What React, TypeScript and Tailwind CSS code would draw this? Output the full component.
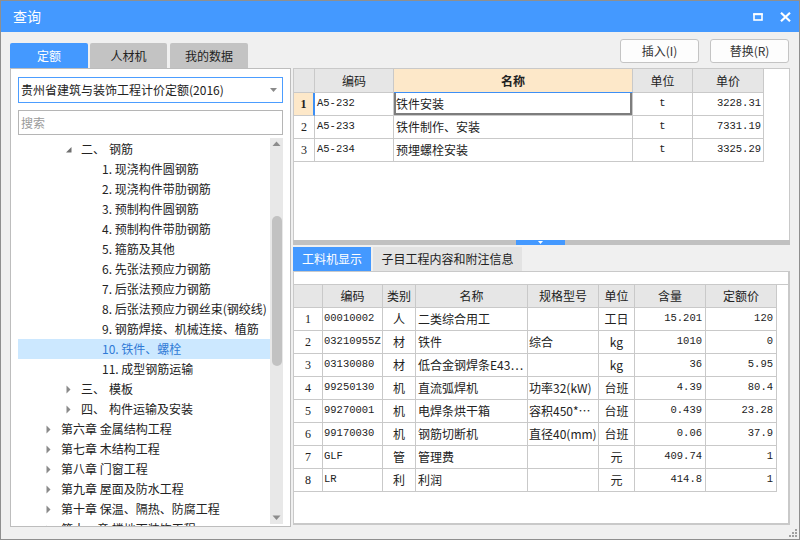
import React from "react";

type TreeRow = {
  lvl: 1 | 2 | 3;
  arrow?: "open" | "closed";
  head?: string;
  label: string;
  selected?: boolean;
};

const treeRows: TreeRow[] = [
  { lvl: 2, arrow: "open", head: "二、", label: "钢筋" },
  { lvl: 3, label: "1. 现浇构件圆钢筋" },
  { lvl: 3, label: "2. 现浇构件带肋钢筋" },
  { lvl: 3, label: "3. 预制构件圆钢筋" },
  { lvl: 3, label: "4. 预制构件带肋钢筋" },
  { lvl: 3, label: "5. 箍筋及其他" },
  { lvl: 3, label: "6. 先张法预应力钢筋" },
  { lvl: 3, label: "7. 后张法预应力钢筋" },
  { lvl: 3, label: "8. 后张法预应力钢丝束(钢绞线)" },
  { lvl: 3, label: "9. 钢筋焊接、机械连接、植筋" },
  { lvl: 3, label: "10. 铁件、螺栓", selected: true },
  { lvl: 3, label: "11. 成型钢筋运输" },
  { lvl: 2, arrow: "closed", head: "三、", label: "模板" },
  { lvl: 2, arrow: "closed", head: "四、", label: "构件运输及安装" },
  { lvl: 1, arrow: "closed", label: "第六章 金属结构工程" },
  { lvl: 1, arrow: "closed", label: "第七章 木结构工程" },
  { lvl: 1, arrow: "closed", label: "第八章 门窗工程" },
  { lvl: 1, arrow: "closed", label: "第九章 屋面及防水工程" },
  { lvl: 1, arrow: "closed", label: "第十章 保温、隔热、防腐工程" },
  { lvl: 1, arrow: "closed", label: "第十一章 楼地面装饰工程" },
];

const quotaRows = [
  { no: "1", code: "A5-232", name: "铁件安装", unit: "t", price: "3228.31" },
  { no: "2", code: "A5-233", name: "铁件制作、安装", unit: "t", price: "7331.19" },
  { no: "3", code: "A5-234", name: "预埋螺栓安装", unit: "t", price: "3325.29" },
];

const gljRows = [
  { no: "1", code: "00010002", kind: "人", name: "二类综合用工", spec: "", unit: "工日", qty: "15.201", price: "120" },
  { no: "2", code: "03210955Z", kind: "材", name: "铁件", spec: "综合", unit: "kg", qty: "1010", price: "0" },
  { no: "3", code: "03130080", kind: "材", name: "低合金钢焊条E43…", spec: "", unit: "kg", qty: "36", price: "5.95" },
  { no: "4", code: "99250130", kind: "机", name: "直流弧焊机", spec: "功率32(kW)", unit: "台班", qty: "4.39", price: "80.4" },
  { no: "5", code: "99270001", kind: "机", name: "电焊条烘干箱", spec: "容积450*…", unit: "台班", qty: "0.439", price: "23.28" },
  { no: "6", code: "99170030", kind: "机", name: "钢筋切断机", spec: "直径40(mm)", unit: "台班", qty: "0.06", price: "37.9" },
  { no: "7", code: "GLF", kind: "管", name: "管理费", spec: "", unit: "元", qty: "409.74", price: "1" },
  { no: "8", code: "LR", kind: "利", name: "利润", spec: "", unit: "元", qty: "414.8", price: "1" },
];

const cell = "border-r border-b border-[#c9c9c9] h-full flex items-center shrink-0 overflow-hidden whitespace-nowrap";
const mono = "font-['Liberation_Mono',monospace] text-[10.5px]";

function Arrow({ kind }: { kind: "open" | "closed" }) {
  return kind === "open" ? (
    <svg width="6" height="6" viewBox="0 0 6 6" className="mt-[1px]">
      <polygon points="5.5,0 5.5,5.5 0,5.5" fill="#6f6f6f" />
    </svg>
  ) : (
    <svg width="5" height="9" viewBox="0 0 5 9">
      <polygon points="0.5,0.5 4.5,4.5 0.5,8.5" fill="#8a8a8a" />
    </svg>
  );
}

function Tree() {
  return (
    <div className="relative mt-[3px] flex-1 overflow-hidden">
      <div className="pt-[1px] pr-[13px]">
        {treeRows.map((r, i) => (
          <div
            key={i}
            className={`flex h-[20px] items-center whitespace-nowrap ${
              r.selected ? "bg-[#cce8ff] text-[#2f7ad6]" : "text-[#222]"
            } ${r.lvl === 1 ? "pl-[28px]" : r.lvl === 2 ? "pl-[48px]" : "pl-[84px]"}`}
          >
            {r.arrow && (
              <span className="flex w-[15px] items-center">
                <Arrow kind={r.arrow} />
              </span>
            )}
            {r.head && <span className="w-[28px]">{r.head}</span>}
            <span>{r.label}</span>
          </div>
        ))}
      </div>
      {/* scrollbar */}
      <div className="absolute top-0 right-0 bottom-[2px] flex w-[13px] flex-col items-center bg-[#e8e8e8]">
        <svg width="9" height="6" viewBox="0 0 9 6" className="mt-[3px]">
          <polygon points="4.5,0.5 8.5,5 0.5,5" fill="#8c8c8c" />
        </svg>
        <div className="mt-[69px] h-[150px] w-[10px] rounded-full bg-[#c2c2c2]" />
        <div className="flex-1" />
        <svg width="9" height="6" viewBox="0 0 9 6" className="mb-[3px]">
          <polygon points="0.5,0.5 8.5,0.5 4.5,5" fill="#8c8c8c" />
        </svg>
      </div>
    </div>
  );
}

function QuotaTable() {
  return (
    <div className="text-[12px] text-[#222]">
      <div className="flex h-[24px] bg-white">
        <div className={`${cell} w-[21px] bg-[#e6e6e6]`} />
        <div className={`${cell} w-[79px] justify-center bg-[#e6e6e6]`}>编码</div>
        <div className={`${cell} w-[239px] justify-center border-b-[#3d8ff5] bg-[#fde8c9] font-bold`}>名称</div>
        <div className={`${cell} w-[60px] justify-center bg-[#e6e6e6]`}>单位</div>
        <div className={`${cell} w-[71px] justify-center bg-[#e6e6e6]`}>单价</div>
      </div>
      {quotaRows.map((r, i) => (
        <div key={r.no} className="flex h-[23px]">
          <div
            className={`${cell} w-[21px] justify-center ${
              i === 0 ? "border-r-2 border-r-[#3d8ff5] bg-[#fde8c9] font-bold" : ""
            } font-['Liberation_Serif',serif] text-[12px]`}
          >
            {r.no}
          </div>
          <div className={`${cell} w-[79px] pl-[2px] ${mono}`}>{r.code}</div>
          <div
            className={`${cell} w-[239px] pl-[2px] ${
              i === 0 ? "shadow-[inset_2px_0_0_#7d7d7d,inset_-2px_0_0_#7d7d7d,inset_0_-2px_0_#7d7d7d]" : ""
            }`}
          >
            {r.name}
          </div>
          <div className={`${cell} w-[60px] justify-center ${mono}`}>{r.unit}</div>
          <div className={`${cell} w-[71px] justify-end pr-[2px] ${mono}`}>{r.price}</div>
        </div>
      ))}
    </div>
  );
}

function GljTable() {
  const hd = `${cell} justify-center bg-[#e6e6e6]`;
  return (
    <div className="text-[12px] text-[#222]">
      <div className="flex h-[24px] border-t border-[#c9c9c9]">
        <div className={`${hd} w-[29px]`} />
        <div className={`${hd} w-[60px]`}>编码</div>
        <div className={`${hd} w-[33px]`}>类别</div>
        <div className={`${hd} w-[112px]`}>名称</div>
        <div className={`${hd} w-[71px]`}>规格型号</div>
        <div className={`${hd} w-[36px]`}>单位</div>
        <div className={`${hd} w-[71px]`}>含量</div>
        <div className={`${hd} w-[71px]`}>定额价</div>
      </div>
      {gljRows.map((r) => (
        <div key={r.no} className="flex h-[23px]">
          <div className={`${cell} w-[29px] justify-center font-['Liberation_Serif',serif] text-[12px]`}>{r.no}</div>
          <div className={`${cell} w-[60px] pl-[1px] ${mono}`}>{r.code}</div>
          <div className={`${cell} w-[33px] justify-center`}>{r.kind}</div>
          <div className={`${cell} w-[112px] pl-[2px]`}>{r.name}</div>
          <div className={`${cell} w-[71px] pl-[1px]`}>{r.spec}</div>
          <div className={`${cell} w-[36px] justify-center`}>{r.unit}</div>
          <div className={`${cell} w-[71px] justify-end pr-[3px] ${mono}`}>{r.qty}</div>
          <div className={`${cell} w-[71px] justify-end pr-[3px] ${mono}`}>{r.price}</div>
        </div>
      ))}
    </div>
  );
}

export default function App() {
  return (
    <div className="relative flex h-[540px] w-[800px] flex-col overflow-hidden border border-[#8f8f8f] bg-[#f0f0f0] font-['Microsoft_YaHei','Noto_Sans_CJK_SC',sans-serif] text-[12px] text-[#222]">
      {/* title bar */}
      <div className="flex h-[31px] shrink-0 items-center bg-[#4499ff] pr-[8px] pl-[12px] text-[14px] text-white">
        <span>查询</span>
        <div className="flex-1" />
        <svg width="10" height="8" viewBox="0 0 10 8" className="mr-[17px]">
          <rect x="1" y="1.2" width="8" height="5.8" fill="none" stroke="#fff" strokeWidth="1.6" />
          <rect x="0.2" y="0.2" width="9.6" height="2" fill="#fff" />
        </svg>
        <svg width="11" height="10" viewBox="0 0 11 10">
          <path d="M1 0.8 L10 9.2 M10 0.8 L1 9.2" stroke="#fff" strokeWidth="2.2" />
        </svg>
      </div>

      <div className="flex flex-1 gap-[2px] pt-[7px] pl-[9px]">
        {/* left column */}
        <div className="flex w-[281px] flex-col">
          <div className="mt-[4px] flex h-[25px] items-end">
            <div className="flex h-[25px] w-[78px] items-center justify-center rounded-t-[2px] bg-[#4499ff] text-white">定额</div>
            <div className="ml-[2px] flex h-[25px] w-[77px] items-center justify-center rounded-t-[2px] bg-[#c3c3c3]">人材机</div>
            <div className="ml-[3px] flex h-[25px] w-[78px] items-center justify-center rounded-t-[2px] bg-[#c3c3c3]">我的数据</div>
          </div>
          <div className="flex h-[459px] flex-col border border-[#bdbdbd] bg-white px-[7px] pt-[8px]">
            <div className="flex h-[26px] shrink-0 items-center border border-[#4c9dff] pr-[5px] pl-[2px]">
              <span className="flex-1 whitespace-nowrap">贵州省建筑与装饰工程计价定额(2016)</span>
              <svg width="7" height="4" viewBox="0 0 7 4">
                <polygon points="0,0 7,0 3.5,4" fill="#8a8a8a" />
              </svg>
            </div>
            <div className="mt-[7px] flex h-[25px] shrink-0 items-center border border-[#b5b5b5] pl-[2px] text-[#9a9a9a]">搜索</div>
            <Tree />
          </div>
        </div>

        {/* right column */}
        <div className="flex w-[497px] flex-col">
          <div className="flex h-[24px] justify-end gap-[11px] pr-[1px]">
            <button className="w-[79px] rounded-[3px] border border-[#c4c4c4] bg-[#fdfdfd] text-[#333]">插入(I)</button>
            <button className="w-[79px] rounded-[3px] border border-[#c4c4c4] bg-[#fdfdfd] text-[#333]">替换(R)</button>
          </div>
          <div className="mt-[5px] h-[172px] border-x border-t border-[#c9c9c9] bg-white pr-[1px]">
            <QuotaTable />
          </div>
          <div className="flex h-[5px] bg-[#c1c1c1]">
            <div className="ml-[223px] flex h-full w-[49px] items-center justify-center bg-[#4499ff]">
              <svg width="5" height="3" viewBox="0 0 5 3">
                <polygon points="0,0 5,0 2.5,3" fill="#fff" />
              </svg>
            </div>
          </div>
          <div className="mt-[2px] flex h-[24px]">
            <div className="flex w-[78px] items-center justify-center bg-[#4499ff] text-white">工料机显示</div>
            <div className="ml-[2px] flex w-[149px] items-center justify-center bg-[#e3e3e3] text-[#222]">子目工程内容和附注信息</div>
          </div>
          <div className="h-[254px] border border-r-2 border-b-2 border-[#c9c9c9] bg-white pt-[12px]">
            <GljTable />
          </div>
        </div>
      </div>

      {/* resize grip */}
      <svg width="8" height="8" viewBox="0 0 8 8" className="absolute right-[2px] bottom-[2px]">
        <rect x="6" y="0" width="2" height="2" fill="#a0a0a0" />
        <rect x="3" y="3" width="2" height="2" fill="#a0a0a0" />
        <rect x="6" y="3" width="2" height="2" fill="#a0a0a0" />
        <rect x="0" y="6" width="2" height="2" fill="#a0a0a0" />
        <rect x="3" y="6" width="2" height="2" fill="#a0a0a0" />
        <rect x="6" y="6" width="2" height="2" fill="#a0a0a0" />
      </svg>
    </div>
  );
}
